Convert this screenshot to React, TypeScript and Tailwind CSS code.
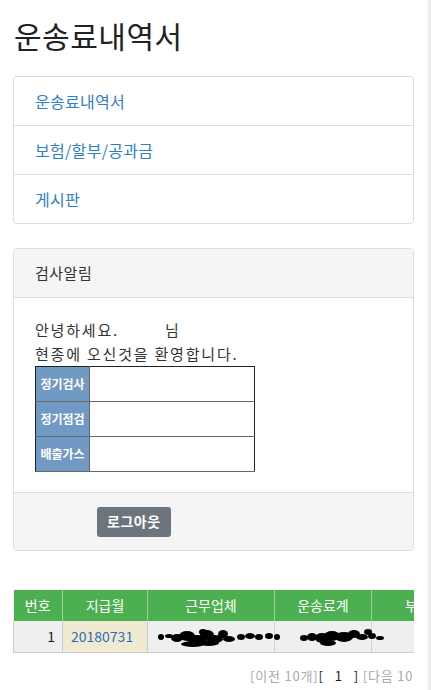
import React from 'react';

const font = { fontFamily: '"Noto Sans CJK KR", "Liberation Sans", sans-serif' };

function Scribble({ width, blobs }: { width: number; blobs: [number, number, number, number][] }) {
  return (
    <svg width={width} height={26} viewBox={`0 0 ${width} 26`} className="block overflow-visible">
      {blobs.map(([cx, cy, rx, ry], i) => (
        <ellipse key={i} cx={cx} cy={cy} rx={rx} ry={ry} fill="#000" />
      ))}
    </svg>
  );
}

const nameBlobs: [number, number, number, number][] = [
  [4, 14, 3, 3], [12, 13, 4, 2], [20, 15, 6, 4], [30, 13, 8, 5], [40, 17, 9, 5], [50, 12, 7, 5],
  [58, 16, 8, 4], [66, 11, 5, 4], [72, 16, 6, 3], [84, 14, 4, 3], [93, 13, 5, 3], [102, 14, 4, 3],
  [112, 13, 4, 3], [120, 14, 3, 3], [36, 21, 12, 3], [52, 20, 10, 3], [46, 9, 4, 3],
];
const feeBlobs: [number, number, number, number][] = [
  [4, 15, 4, 3], [12, 14, 5, 4], [22, 15, 7, 5], [32, 13, 8, 5], [44, 14, 9, 5], [54, 11, 6, 4],
  [62, 14, 6, 3], [68, 9, 4, 3], [72, 13, 4, 3], [80, 15, 4, 2], [28, 20, 8, 3],
];

export default function App() {
  const notices = ['정기검사', '정기점검', '배출가스'];
  return (
    <div style={font} className="w-[431px] min-h-[690px] bg-white text-[#333] border-r-[3px] border-[#ececec] overflow-hidden">
      <div className="w-[401px] ml-[13px]">
        <h1 className="pt-[16px] text-[30px] leading-[38px] text-[#222] ml-[1px] tracking-[0.5px]">운송료내역서</h1>

        <div className="mt-[22px] border border-[#ddd] rounded-[4px]">
          {['운송료내역서', '보험/할부/공과금', '게시판'].map((t, i) => (
            <div
              key={t}
              className={`flex items-center px-[21px] text-[16px] text-[#2f7fc4] tracking-[0.3px] ${i > 0 ? 'h-[49px] border-t border-[#ddd]' : 'h-[48px]'}`}
            >
              {t}
            </div>
          ))}
        </div>

        <div className="mt-[24px] border border-[#ddd] rounded-[4px] overflow-hidden">
          <div className="h-[49px] bg-[#f5f5f5] border-b border-[#ddd] flex items-center px-[21px] text-[15px] text-[#333] tracking-[0.5px]">
            검사알림
          </div>
          <div className="px-[21px] pt-[20px] pb-[20px] text-[15px] leading-[24px] tracking-[1.8px]">
            <div>
              안녕하세요.<span className="inline-block w-[46px]"></span>님
            </div>
            <div>현종에 오신것을 환영합니다.</div>
            <table className="w-[220px] border border-[#222] border-collapse tracking-normal">
              <tbody>
                {notices.map((n) => (
                  <tr key={n} className="h-[35px]">
                    <td className="w-[54px] bg-[#7099c3] text-white text-[12px] font-bold text-center border-b border-[#666] px-0">
                      {n}
                    </td>
                    <td className="bg-white border-b border-l border-[#666]"></td>
                  </tr>
                ))}
              </tbody>
            </table>
          </div>
          <div className="h-[58px] bg-[#f5f5f5] border-t border-[#ddd] flex items-center pl-[83px]">
            <button className="h-[30px] px-[10px] rounded-[3px] bg-[#6c757d] text-white text-[14px] font-bold tracking-[0.5px]">
              로그아웃
            </button>
          </div>
        </div>

        <div className="mt-[39px] overflow-hidden">
          <table className="w-[460px] table-fixed border-collapse text-[14px]">
            <colgroup>
              <col className="w-[49px]" />
              <col className="w-[85px]" />
              <col className="w-[127px]" />
              <col className="w-[97px]" />
              <col className="w-[102px]" />
            </colgroup>
            <thead>
              <tr className="h-[31px] bg-[#4caf50] text-white">
                <th className="font-normal border-r border-[#9ad39c]">번호</th>
                <th className="font-normal border-r border-[#9ad39c]">지급월</th>
                <th className="font-normal border-r border-[#9ad39c]">근무업체</th>
                <th className="font-normal border-r border-[#9ad39c]">운송료계</th>
                <th className="font-normal text-left pl-[33px]">부</th>
              </tr>
            </thead>
            <tbody>
              <tr className="h-[31px] bg-[#efefef] border-b border-[#ccc]">
                <td className="text-right pr-[7px] border-r border-l border-[#ccc] text-[#222]">1</td>
                <td className="bg-[#f1ead3] text-[#2a6eb5] pl-[8px] border-r border-[#ccc]">20180731</td>
                <td className="border-r border-[#c8d4e0] pl-[9px]">
                  <Scribble width={112} blobs={nameBlobs} />
                </td>
                <td className="border-r border-[#c8d4e0] pl-[25px]">
                  <Scribble width={70} blobs={feeBlobs} />
                </td>
                <td className="border-r border-[#ddd]"></td>
              </tr>
            </tbody>
          </table>
        </div>

        <div className="mt-[13px] flex justify-end overflow-hidden whitespace-nowrap text-[13px] text-[#aaa] tracking-[0.8px]">
          <span className="mr-[-12px] shrink-0">
            [이전 10개]<span className="text-[#222]">[&nbsp;&nbsp;&nbsp;1&nbsp;&nbsp;&nbsp;]</span> [다음 10개
          </span>
        </div>
      </div>
    </div>
  );
}
